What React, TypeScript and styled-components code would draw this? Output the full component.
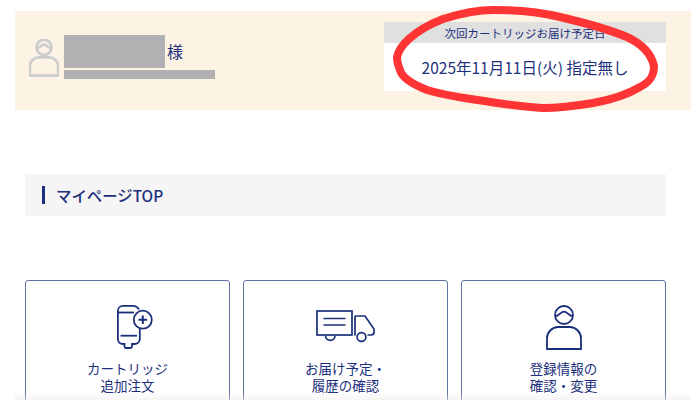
import React from 'react'
import styled, { createGlobalStyle } from 'styled-components'

const NAVY = '#1c2f7c'

const GlobalStyle = createGlobalStyle`
  html, body {
    margin: 0;
    padding: 0;
    height: 400px;
    overflow: hidden;
    background: #fff;
    font-family: "Noto Sans CJK JP", "Noto Sans", sans-serif;
  }
`

const CartridgeIcon = () => (
  <svg width="36" height="44" viewBox="0 0 36 44" fill="none" stroke={NAVY} strokeWidth="1.8">
    <path d="M22 4.5C20.5 2 18.5 0.9 16 0.9H6C3 0.9 0.9 3 0.9 6V34C0.9 37 3 39 6 39H7.5V41.5C7.5 42.5 8 43 9 43H13.5C14.5 43 15 42.5 15 41.5V39H17.5C20.5 39 22.8 37 22.8 34V23.8" />
    <path d="M0.9 7.5H17" />
    <path d="M3.5 30.7H20" />
    <circle cx="25.8" cy="14.7" r="9" />
    <path d="M25.8 10.4V19M21.5 14.7H30.1" strokeWidth="2" />
  </svg>
)

const TruckIcon = () => (
  <svg width="60" height="34" viewBox="0 0 60 34" fill="none" stroke={NAVY} strokeWidth="1.7">
    <rect x="1" y="1" width="35" height="24" />
    <path d="M7.5 8.5H29.5M7.5 15H29.5" />
    <path d="M9.5 25.5C9.5 32 19 32 19 25.5" />
    <path d="M39 6H49L58 19V22C58 24 57 25 55 25H51.5M39 6V25H39.5" />
    <circle cx="45.5" cy="27" r="4.4" />
  </svg>
)

const PersonIcon = ({ color = NAVY, width = 36, stroke = 1.8 }: { color?: string; width?: number; stroke?: number }) => (
  <svg width={width} height={width * 1.25} viewBox="0 0 36 45" fill="none" stroke={color} strokeWidth={stroke}>
    <circle cx="18" cy="10" r="9" />
    <path d="M9.5 11.5C13 10 15.5 6.7 18 6.7C20.5 6.7 23 10 26.5 11.5" />
    <path d="M1 44V33C1 27 6.5 22 12 22H24C29.5 22 35 27 35 33V44Z" />
  </svg>
)

const RedCircle = () => (
  <Scribble width="700" height="130" viewBox="0 0 700 130" fill="none">
    <path
      d="M397 57C399 47 412 31 443 19C465 12 480 10 493 10C515 10 540 12 560 17C590 24 610 30 627 37C640 43 651 53 654 66C654 76 650 82 640 87C625 96 610 100 593 103C575 106 560 108 543 108C520 107 498 103 477 100C458 97 443 95 427 90C412 84 402 78 400 70C398 65 397 61 397 57Z"
      stroke="#ff3434"
      strokeWidth="8"
      strokeLinejoin="round"
    />
  </Scribble>
)

const menu = [
  { icon: <CartridgeIcon />, shift: 14, lines: ['カートリッジ', '追加注文'] },
  { icon: <TruckIcon />, shift: 0, lines: ['お届け予定・', '履歴の確認'] },
  { icon: <PersonIcon />, shift: 0, lines: ['登録情報の', '確認・変更'] },
]

export default function App() {
  return (
    <Page>
      <GlobalStyle />
      <Banner>
        <UserBlock>
          <PersonIcon color="#cdcdcd" width={30} stroke={3.4} />
          <NameColumn>
            <NameRow>
              <NameMask />
              <Honorific>様</Honorific>
            </NameRow>
            <SubMask />
          </NameColumn>
        </UserBlock>
        <DeliveryBox>
          <DeliveryHead>次回カートリッジお届け予定日</DeliveryHead>
          <DeliveryDate>2025年11月11日(火) 指定無し</DeliveryDate>
        </DeliveryBox>
      </Banner>
      <SectionTitle>
        <TitleText>マイページTOP</TitleText>
      </SectionTitle>
      <CardGrid>
        {menu.map((item) => (
          <Card key={item.lines[0]}>
            <IconSlot $shift={item.shift}>{item.icon}</IconSlot>
            <CardLabel>
              {item.lines[0]}
              <br />
              {item.lines[1]}
            </CardLabel>
          </Card>
        ))}
      </CardGrid>
      <BottomFade />
      <RedCircle />
    </Page>
  )
}

const Page = styled.div`
  position: relative;
  width: 700px;
  height: 400px;
  overflow: hidden;
  padding-top: 11px;
  box-sizing: border-box;
`

const Banner = styled.div`
  display: flex;
  justify-content: space-between;
  margin: 0 9px 0 15px;
  height: 99px;
  padding: 11px 25px 0 14px;
  box-sizing: border-box;
  background: #fdf3e5;
`

const UserBlock = styled.div`
  display: flex;
  align-items: flex-start;
  gap: 5px;
  padding-top: 13px;
  svg {
    margin-top: 4px;
  }
`

const NameColumn = styled.div`
  display: flex;
  flex-direction: column;
  gap: 2px;
`

const NameRow = styled.div`
  display: flex;
  align-items: center;
  gap: 2px;
`

const NameMask = styled.div`
  width: 101px;
  height: 33px;
  background: #b1b1b3;
`

const Honorific = styled.span`
  font-size: 16px;
  line-height: 33px;
  color: ${NAVY};
`

const SubMask = styled.div`
  width: 151px;
  height: 9px;
  background: #b1b1b3;
`

const DeliveryBox = styled.div`
  display: flex;
  flex-direction: column;
  width: 282px;
  height: 69px;
  background: #fff;
`

const DeliveryHead = styled.div`
  height: 21px;
  line-height: 22px;
  background: #e0e0e0;
  text-align: center;
  font-size: 11.5px;
  color: ${NAVY};
`

const DeliveryDate = styled.div`
  flex: 1;
  display: flex;
  align-items: center;
  justify-content: center;
  font-size: 15.5px;
  color: ${NAVY};
`

const SectionTitle = styled.div`
  display: flex;
  align-items: center;
  height: 42px;
  margin: 64px 34px 0 25px;
  padding-left: 17px;
  padding-bottom: 1px;
  box-sizing: border-box;
  background: #f5f5f5;
`

const TitleText = styled.h2`
  margin: 0;
  padding-left: 11px;
  border-left: 3px solid ${NAVY};
  font-size: 15.4px;
  font-weight: 500;
  line-height: 18px;
  color: ${NAVY};
`

const CardGrid = styled.div`
  display: grid;
  grid-template-columns: repeat(3, 205px);
  gap: 13px;
  margin: 64px 0 0 25px;
`

const Card = styled.div`
  display: flex;
  flex-direction: column;
  align-items: center;
  height: 140px;
  border: 1px solid #5f70a4;
  border-radius: 3px;
  box-sizing: border-box;
`

const IconSlot = styled.div<{ $shift: number }>`
  display: flex;
  align-items: center;
  justify-content: center;
  height: 46px;
  margin-top: 23px;
  padding-left: ${(p) => p.$shift}px;
`

const CardLabel = styled.div`
  margin-top: 10px;
  text-align: center;
  font-size: 13.5px;
  line-height: 17px;
  color: ${NAVY};
`

const BottomFade = styled.div`
  position: absolute;
  left: 15px;
  right: 9px;
  bottom: 0;
  height: 8px;
  background: linear-gradient(rgba(235, 235, 235, 0), rgba(235, 235, 235, 0.5));
`

const Scribble = styled.svg`
  position: absolute;
  left: 0;
  top: 0;
  pointer-events: none;
`
